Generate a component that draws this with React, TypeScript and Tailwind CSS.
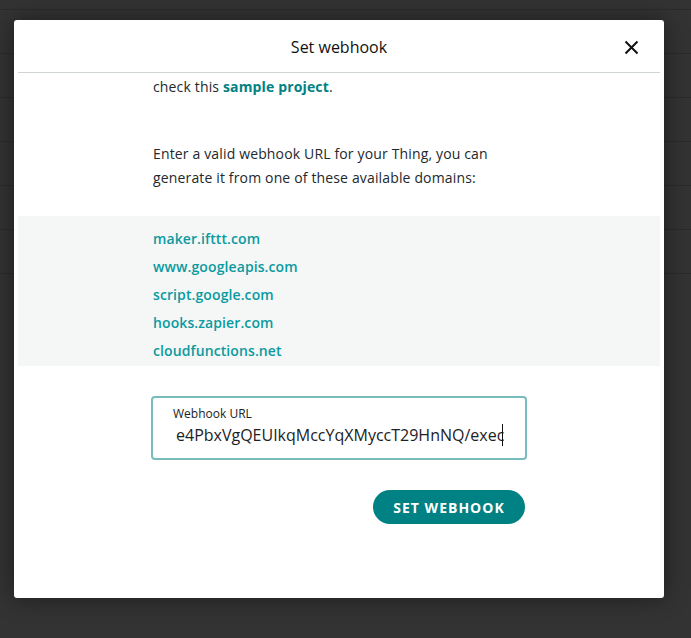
import React from "react";

const domains = [
  "maker.ifttt.com",
  "www.googleapis.com",
  "script.google.com",
  "hooks.zapier.com",
  "cloudfunctions.net",
];

export default function App() {
  const rows = Array.from({ length: 6 });
  return (
    <div
      className="relative w-[691px] h-[638px] overflow-hidden bg-[#333333]"
      style={{ fontFamily: '"Open Sans", "Noto Sans", sans-serif' }}
    >
      {/* background rows */}
      <div className="flex flex-col pt-[9px]">
        {rows.map((_, i) => (
          <div key={i} className="h-[44px] border-t border-[#2b2b2b] shrink-0" />
        ))}
        <div className="border-t border-[#2b2b2b]" />
      </div>

      {/* modal */}
      <div className="absolute left-[14px] top-[20px] w-[650px] h-[578px] bg-white rounded-[3px] shadow-[0_0_24px_rgba(0,0,0,0.45)] px-[4px] flex flex-col">
        <div className="relative h-[53px] flex items-center justify-center border-b border-[#cfd4d5] shrink-0">
          <span className="text-[16px] text-[#111] pt-[1px]">Set webhook</span>
          <button className="absolute right-[21px] top-[19px] w-[16px] h-[16px] flex items-center justify-center">
            <svg width="15" height="15" viewBox="0 0 15 15">
              <path d="M1.5 1.5 L13.5 13.5 M13.5 1.5 L1.5 13.5" stroke="#111" strokeWidth="2" />
            </svg>
          </button>
        </div>

        <div className="flex flex-col">
          <div className="w-[376px] mx-auto pl-[2px] pt-[2px] text-[14px] leading-[24px] tracking-[0.15px] text-[#22292c]">
            <p>
              check this{" "}
              <span className="font-bold text-[#008184]">sample project</span>.
            </p>
            <p className="mt-[43px]">
              Enter a valid webhook URL for your Thing, you can generate it from one of these
              available domains:
            </p>
          </div>

          <div className="mt-[26px] h-[150px] bg-[#f5f7f7] pt-[13px]">
            <div className="w-[376px] mx-auto pl-[2px] flex flex-col gap-[8px]">
              {domains.map((d) => (
                <span
                  key={d}
                  className="text-[14px] leading-[20px] font-semibold tracking-[0.1px] text-[#0a9a9f]"
                >
                  {d}
                </span>
              ))}
            </div>
          </div>

          <div className="w-[376px] mx-auto mt-[30px]">
            <div className="h-[64px] border-2 border-[#78bdbe] rounded-[4px] pl-[20px] pr-[12px] pb-[4px] flex flex-col justify-center overflow-hidden">
              <span className="text-[12px] leading-[16px] text-[#222]">Webhook URL</span>
              <div className="flex items-center pl-[3px] mt-[1px]">
                <span className="text-[16px] leading-[24px] text-[#1c2224] whitespace-nowrap">
                  e4PbxVgQEUIkqMccYqXMyccT29HnNQ/exec
                </span>
                <span className="w-px h-[22px] bg-[#111] -ml-[2px]" />
              </div>
            </div>

            <div className="flex justify-end mt-[30px]">
              <button className="h-[34px] w-[152px] mr-[2px] rounded-full bg-[#008184] text-white text-[14px] font-bold tracking-[1px] flex items-center justify-center">
                SET WEBHOOK
              </button>
            </div>
          </div>
        </div>
      </div>
    </div>
  );
}
